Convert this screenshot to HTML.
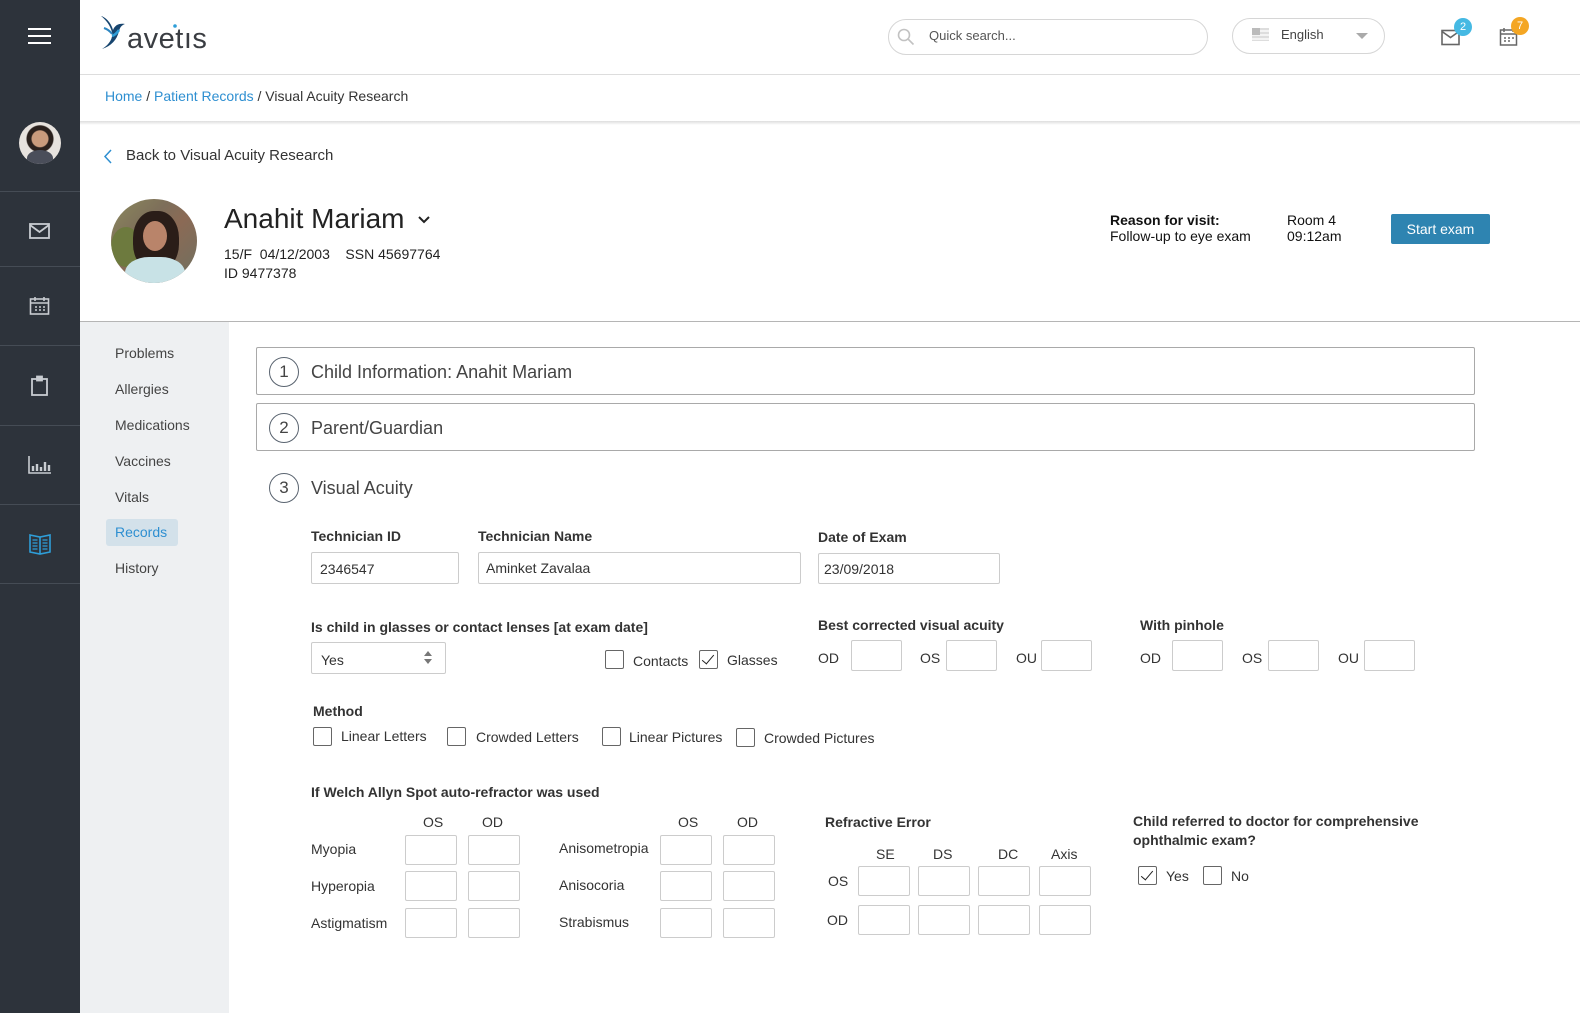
<!DOCTYPE html>
<html><head><meta charset="utf-8">
<style>
*{box-sizing:border-box;margin:0;padding:0}
body{width:1580px;height:1013px;position:relative;overflow:hidden;background:#fff;font-family:"Liberation Sans",sans-serif;color:#333;font-size:14px}
.a{position:absolute}
.t{position:absolute;white-space:nowrap;line-height:1}
.bx{position:absolute;border:1px solid #ccc;border-radius:2px;background:#fff}
.cb{position:absolute;width:19px;height:19px;border:1px solid #666;border-radius:2px;background:#fff}
.cb.on::after{content:"";position:absolute;left:5px;top:1px;width:5px;height:11px;border:solid #222;border-width:0 1.6px 1.6px 0;transform:rotate(40deg)}
.lb{font-weight:bold;font-size:14px;color:#333}
.sep{position:absolute;left:0;width:80px;height:1px;background:#454c55}
.circ{position:absolute;width:30px;height:30px;border:1px solid #5a6470;border-radius:50%;text-align:center;line-height:28px;font-size:17px;color:#444}
.nav{position:absolute;left:115px;font-size:14px;color:#444}
</style></head><body>
<!-- sidebar -->
<div class="a" style="left:0;top:0;width:80px;height:1013px;background:#2d333b"></div>
<div class="a" style="left:28px;top:28px;width:23px;height:2px;background:#fff"></div>
<div class="a" style="left:28px;top:35px;width:23px;height:2px;background:#fff"></div>
<div class="a" style="left:28px;top:42px;width:23px;height:2px;background:#fff"></div>
<div class="a" style="left:19px;top:122px;width:42px;height:42px;border-radius:50%;background:radial-gradient(circle at 50% 40%,#c99b7c 0 8px,#2a211d 9px 13px,#e7e3de 14px);overflow:hidden"><div class="a" style="left:8px;top:28px;width:26px;height:16px;border-radius:50% 50% 0 0;background:#4a4e5a"></div></div>
<div class="sep" style="top:191px"></div><div class="sep" style="top:266px"></div><div class="sep" style="top:345px"></div><div class="sep" style="top:425px"></div><div class="sep" style="top:504px"></div><div class="sep" style="top:583px"></div>
<svg class="a" style="left:29px;top:222px" width="22" height="18" viewBox="0 0 22 18" fill="none" stroke="#c8ccd1" stroke-width="1.8"><rect x="1" y="2" width="19" height="14"/><path d="M1 3l9.5 7L20 3"/></svg>
<svg class="a" style="left:29px;top:296px" width="22" height="20" viewBox="0 0 22 20" fill="none" stroke="#c8ccd1" stroke-width="1.6"><rect x="1.5" y="3" width="18" height="15"/><path d="M1.5 7h18M6 1v4M15 1v4M6 11h2M10 11h2M14 11h2M6 14h2M10 14h2M14 14h2"/></svg>
<svg class="a" style="left:30px;top:375px" width="20" height="22" viewBox="0 0 20 22" fill="none" stroke="#c8ccd1" stroke-width="1.8"><rect x="2" y="4" width="15" height="16"/><rect x="7" y="1.5" width="5" height="4" fill="#c8ccd1"/></svg>
<svg class="a" style="left:28px;top:455px" width="24" height="20" viewBox="0 0 24 20" fill="none" stroke="#c8ccd1" stroke-width="1.6"><path d="M1 1v17h22"/><path d="M5 16v-5M9 16v-7M13 16v-4M17 16v-9M21 16v-6" stroke-width="2.4"/></svg>
<svg class="a" style="left:29px;top:533px" width="22" height="22" viewBox="0 0 22 22" fill="none" stroke="#2e9ed8" stroke-width="1.6"><path d="M1 2l10 2 10-2v17l-10 2-10-2z M11 4v17"/><path d="M3.5 7h5M3.5 10h5M3.5 13h5M3.5 16h5M13.5 7h5M13.5 10h5M13.5 13h5M13.5 16h5" stroke-width="1.2"/></svg>

<!-- header -->
<svg class="a" style="left:100px;top:14px" width="112" height="38" viewBox="0 0 112 38">
<path d="M1 2C5 3 11 8 13 16 15 11 19 9 25 10 22 11 20 13 19 17 17 26 11 32 2 35 10 30 13 24 12 18 10 11 6 6 1 2z" fill="#17456f"/>
<path d="M4 14c3 1 6 3 8 6" stroke="#2e86c1" stroke-width="2" fill="none"/>
<path d="M12 22c3-1 5-3 7-6" stroke="#2e9ed8" stroke-width="2.5" fill="none"/>
<text x="27" y="34" font-family="Liberation Sans,sans-serif" font-size="29" fill="#3a3d42" letter-spacing="0.5">avetıs</text><circle cx="75" cy="12" r="1.8" fill="#2e9ed8"/></svg>
<div class="a" style="left:80px;top:74px;width:1500px;height:1px;background:#ddd"></div>
<div class="a" style="left:888px;top:19px;width:320px;height:36px;border:1px solid #d6d6d6;border-radius:18px"></div>
<svg class="a" style="left:897px;top:28px" width="18" height="18" viewBox="0 0 18 18" fill="none" stroke="#c2c2c2" stroke-width="1.6"><circle cx="7" cy="7" r="5.5"/><path d="M11 11l5.5 5.5"/></svg>
<div class="t" style="left:929px;top:29px;font-size:13px;color:#555">Quick search...</div>
<div class="a" style="left:1232px;top:18px;width:153px;height:36px;border:1px solid #d6d6d6;border-radius:18px"></div>
<div class="a" style="left:1252px;top:28px;width:17px;height:13px;background:repeating-linear-gradient(#ddd 0 2px,#f3f3f3 2px 4px)"><div style="width:8px;height:7px;background:#bbb"></div></div>
<div class="t" style="left:1281px;top:28px;font-size:13px;color:#444">English</div>
<div class="a" style="left:1356px;top:33px;width:0;height:0;border:6px solid transparent;border-top:6px solid #aaa;border-bottom:0"></div>
<svg class="a" style="left:1441px;top:29px" width="20" height="17" viewBox="0 0 20 17" fill="none" stroke="#666" stroke-width="1.6"><rect x="1" y="1.5" width="17" height="14"/><path d="M1 2.5l8.5 6 8.5-6"/></svg>
<div class="a" style="left:1454px;top:18px;width:18px;height:18px;border-radius:50%;background:#45b9e3;color:#fff;font-size:11px;text-align:center;line-height:18px">2</div>
<svg class="a" style="left:1499px;top:27px" width="20" height="20" viewBox="0 0 20 20" fill="none" stroke="#666" stroke-width="1.5"><rect x="1.5" y="3" width="16" height="15"/><path d="M1.5 7h16M5 1v4M14 1v4M5 11h2M9 11h2M13 11h2M5 14h2M9 14h2"/></svg>
<div class="a" style="left:1511px;top:17px;width:18px;height:18px;border-radius:50%;background:#f4a623;color:#fff;font-size:11px;text-align:center;line-height:18px">7</div>

<!-- breadcrumb -->
<div class="t" style="left:105px;top:89px;font-size:14px;color:#333"><span style="color:#2e8fd1">Home</span> / <span style="color:#2e8fd1">Patient Records</span> / Visual Acuity Research</div>
<div class="a" style="left:80px;top:121px;width:1500px;height:4px;background:linear-gradient(#ddd,#fff)"></div>

<!-- back -->
<svg class="a" style="left:103px;top:149px" width="10" height="15" viewBox="0 0 10 15" fill="none" stroke="#2e8fd1" stroke-width="1.5"><path d="M8 1L2 7.5 8 14"/></svg>
<div class="t" style="left:126px;top:148px;font-size:15px;color:#333">Back to Visual Acuity Research</div>

<!-- patient -->
<div class="a" style="left:111px;top:199px;width:86px;height:84px;border-radius:50%;overflow:hidden;background:linear-gradient(135deg,#8c8a5d 0%,#7d6e5a 35%,#8b6a55 55%,#6e7060 100%)">
<div class="a" style="left:0;top:28px;width:30px;height:40px;border-radius:50%;background:#6d7a3e"></div>
<div class="a" style="left:22px;top:12px;width:46px;height:60px;border-radius:45%;background:#2a1d18"></div>
<div class="a" style="left:32px;top:22px;width:24px;height:30px;border-radius:50%;background:#b9846a"></div>
<div class="a" style="left:14px;top:58px;width:60px;height:40px;border-radius:40% 40% 0 0;background:#c8e2e6"></div>
</div>
<div class="t" style="left:224px;top:205px;font-size:28px;color:#222">Anahit Mariam</div>
<svg class="a" style="left:417px;top:215px" width="14" height="10" viewBox="0 0 14 10" fill="none" stroke="#222" stroke-width="2"><path d="M2 2l5 5 5-5"/></svg>
<div class="t" style="left:224px;top:247px;font-size:14px;color:#222">15/F&nbsp; 04/12/2003 &nbsp;&nbsp; SSN 45697764</div>
<div class="t" style="left:224px;top:266px;font-size:14px;color:#222">ID 9477378</div>
<div class="t" style="left:1110px;top:213px;font-size:14px;font-weight:bold;color:#111">Reason for visit:</div>
<div class="t" style="left:1110px;top:229px;font-size:14px;color:#111">Follow-up to eye exam</div>
<div class="t" style="left:1287px;top:213px;font-size:14px;color:#111">Room 4</div>
<div class="t" style="left:1287px;top:229px;font-size:14px;color:#111">09:12am</div>
<div class="a" style="left:1391px;top:214px;width:99px;height:30px;background:#2e84b1;border-radius:2px;color:#fff;font-size:14px;text-align:center;line-height:30px">Start exam</div>
<div class="a" style="left:80px;top:321px;width:1500px;height:1px;background:#b5b5b5"></div>

<!-- left nav -->
<div class="a" style="left:80px;top:322px;width:149px;height:691px;background:#eef0f2"></div>
<div class="nav" style="top:345px">Problems</div>
<div class="nav" style="top:381px">Allergies</div>
<div class="nav" style="top:417px">Medications</div>
<div class="nav" style="top:453px">Vaccines</div>
<div class="nav" style="top:489px">Vitals</div>
<div class="a" style="left:106px;top:519px;width:72px;height:27px;background:#d3e1ea;border-radius:3px"></div>
<div class="nav" style="top:524px;color:#2e8fd1">Records</div>
<div class="nav" style="top:560px">History</div>

<!-- sections -->
<div class="a" style="left:256px;top:347px;width:1219px;height:48px;border:1px solid #a9a9a9;border-radius:2px"></div>
<div class="circ" style="left:269px;top:357px">1</div>
<div class="t" style="left:311px;top:363px;font-size:18px;color:#444">Child Information: Anahit Mariam</div>
<div class="a" style="left:256px;top:403px;width:1219px;height:48px;border:1px solid #a9a9a9;border-radius:2px"></div>
<div class="circ" style="left:269px;top:413px">2</div>
<div class="t" style="left:311px;top:419px;font-size:18px;color:#444">Parent/Guardian</div>
<div class="circ" style="left:269px;top:473px">3</div>
<div class="t" style="left:311px;top:479px;font-size:18px;color:#444">Visual Acuity</div>

<div class="t lb" style="left:311px;top:529px">Technician ID</div>
<div class="t lb" style="left:478px;top:529px">Technician Name</div>
<div class="t lb" style="left:818px;top:530px">Date of Exam</div>
<div class="bx" style="left:311px;top:552px;width:148px;height:32px"></div><div class="t" style="left:320px;top:562px">2346547</div>
<div class="bx" style="left:478px;top:552px;width:323px;height:32px"></div><div class="t" style="left:486px;top:561px">Aminket Zavalaa</div>
<div class="bx" style="left:818px;top:553px;width:182px;height:31px"></div><div class="t" style="left:824px;top:562px">23/09/2018</div>

<div class="t lb" style="left:311px;top:620px">Is child in glasses or contact lenses [at exam date]</div>
<div class="bx" style="left:311px;top:642px;width:135px;height:32px"></div><div class="t" style="left:321px;top:653px">Yes</div>
<div class="a" style="left:424px;top:651px;border:4px solid transparent;border-bottom:5px solid #777;border-top:0"></div>
<div class="a" style="left:424px;top:659px;border:4px solid transparent;border-top:5px solid #777;border-bottom:0"></div>
<div class="cb" style="left:605px;top:650px"></div><div class="t" style="left:633px;top:654px">Contacts</div>
<div class="cb on" style="left:699px;top:650px"></div><div class="t" style="left:727px;top:653px">Glasses</div>

<div class="t lb" style="left:818px;top:618px">Best corrected visual acuity</div>
<div class="t" style="left:818px;top:651px">OD</div><div class="bx" style="left:851px;top:640px;width:51px;height:31px"></div>
<div class="t" style="left:920px;top:651px">OS</div><div class="bx" style="left:946px;top:640px;width:51px;height:31px"></div>
<div class="t" style="left:1016px;top:651px">OU</div><div class="bx" style="left:1041px;top:640px;width:51px;height:31px"></div>
<div class="t lb" style="left:1140px;top:618px">With pinhole</div>
<div class="t" style="left:1140px;top:651px">OD</div><div class="bx" style="left:1172px;top:640px;width:51px;height:31px"></div>
<div class="t" style="left:1242px;top:651px">OS</div><div class="bx" style="left:1268px;top:640px;width:51px;height:31px"></div>
<div class="t" style="left:1338px;top:651px">OU</div><div class="bx" style="left:1364px;top:640px;width:51px;height:31px"></div>

<div class="t lb" style="left:313px;top:704px">Method</div>
<div class="cb" style="left:313px;top:727px"></div><div class="t" style="left:341px;top:729px">Linear Letters</div>
<div class="cb" style="left:447px;top:727px"></div><div class="t" style="left:476px;top:730px">Crowded Letters</div>
<div class="cb" style="left:602px;top:727px"></div><div class="t" style="left:629px;top:730px">Linear Pictures</div>
<div class="cb" style="left:736px;top:728px"></div><div class="t" style="left:764px;top:731px">Crowded Pictures</div>

<div class="t lb" style="left:311px;top:785px">If Welch Allyn Spot auto-refractor was used</div>
<div class="t" style="left:423px;top:815px">OS</div><div class="t" style="left:482px;top:815px">OD</div>
<div class="t" style="left:678px;top:815px">OS</div><div class="t" style="left:737px;top:815px">OD</div>
<div class="t" style="left:311px;top:842px">Myopia</div>
<div class="t" style="left:311px;top:879px">Hyperopia</div>
<div class="t" style="left:311px;top:916px">Astigmatism</div>
<div class="t" style="left:559px;top:841px">Anisometropia</div>
<div class="t" style="left:559px;top:878px">Anisocoria</div>
<div class="t" style="left:559px;top:915px">Strabismus</div>
<div class="bx" style="left:405px;top:835px;width:52px;height:30px"></div><div class="bx" style="left:468px;top:835px;width:52px;height:30px"></div>
<div class="bx" style="left:405px;top:871px;width:52px;height:30px"></div><div class="bx" style="left:468px;top:871px;width:52px;height:30px"></div>
<div class="bx" style="left:405px;top:908px;width:52px;height:30px"></div><div class="bx" style="left:468px;top:908px;width:52px;height:30px"></div>
<div class="bx" style="left:660px;top:835px;width:52px;height:30px"></div><div class="bx" style="left:723px;top:835px;width:52px;height:30px"></div>
<div class="bx" style="left:660px;top:871px;width:52px;height:30px"></div><div class="bx" style="left:723px;top:871px;width:52px;height:30px"></div>
<div class="bx" style="left:660px;top:908px;width:52px;height:30px"></div><div class="bx" style="left:723px;top:908px;width:52px;height:30px"></div>

<div class="t lb" style="left:825px;top:815px">Refractive Error</div>
<div class="t" style="left:876px;top:847px">SE</div><div class="t" style="left:933px;top:847px">DS</div><div class="t" style="left:998px;top:847px">DC</div><div class="t" style="left:1051px;top:847px">Axis</div>
<div class="t" style="left:828px;top:874px">OS</div><div class="t" style="left:827px;top:913px">OD</div>
<div class="bx" style="left:858px;top:866px;width:52px;height:30px"></div><div class="bx" style="left:918px;top:866px;width:52px;height:30px"></div><div class="bx" style="left:978px;top:866px;width:52px;height:30px"></div><div class="bx" style="left:1039px;top:866px;width:52px;height:30px"></div>
<div class="bx" style="left:858px;top:905px;width:52px;height:30px"></div><div class="bx" style="left:918px;top:905px;width:52px;height:30px"></div><div class="bx" style="left:978px;top:905px;width:52px;height:30px"></div><div class="bx" style="left:1039px;top:905px;width:52px;height:30px"></div>

<div class="t lb" style="left:1133px;top:814px">Child referred to doctor for comprehensive</div>
<div class="t lb" style="left:1133px;top:833px">ophthalmic exam?</div>
<div class="cb on" style="left:1138px;top:866px"></div><div class="t" style="left:1166px;top:869px">Yes</div>
<div class="cb" style="left:1203px;top:866px"></div><div class="t" style="left:1231px;top:869px">No</div>
</body></html>
